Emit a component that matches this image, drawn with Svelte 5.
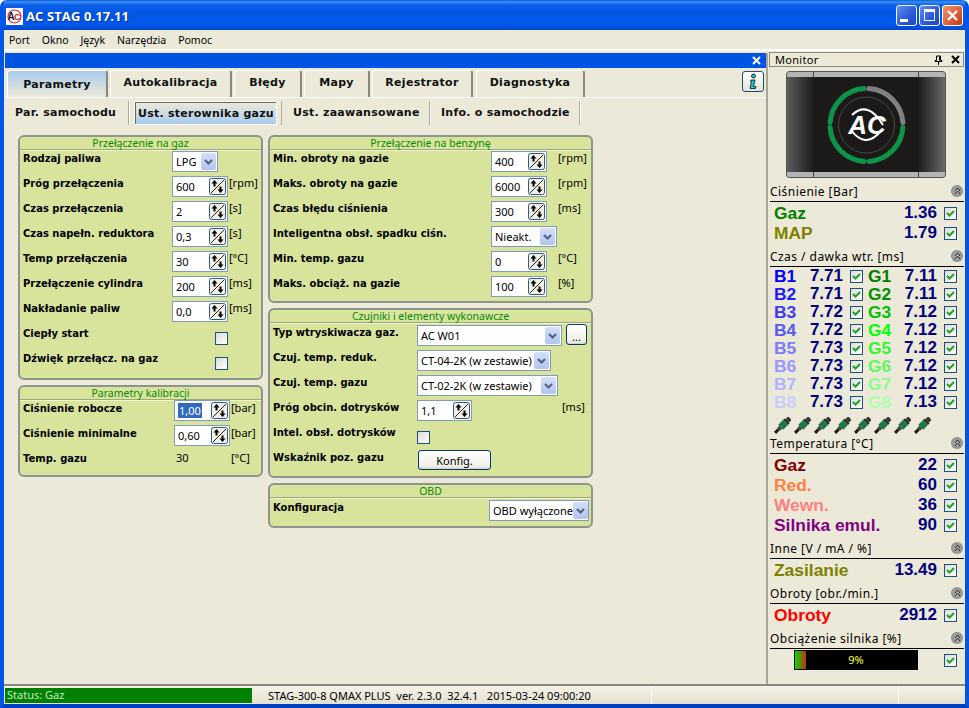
<script>
  const tabs = ['Parametry', 'Autokalibracja', 'Błędy', 'Mapy', 'Rejestrator', 'Diagnostyka'];
  const subtabs = ['Par. samochodu', 'Ust. sterownika gazu', 'Ust. zaawansowane', 'Info. o samochodzie'];

  const gasRows = [
    { label: 'Próg przełączenia', value: '600', unit: '[rpm]' },
    { label: 'Czas przełączenia', value: '2', unit: '[s]' },
    { label: 'Czas napełn. reduktora', value: '0,3', unit: '[s]' },
    { label: 'Temp przełączenia', value: '30', unit: '[°C]' },
    { label: 'Przełączenie cylindra', value: '200', unit: '[ms]' },
    { label: 'Nakładanie paliw', value: '0,0', unit: '[ms]' }
  ];
  const petrolTop = [
    { label: 'Min. obroty na gazie', value: '400', unit: '[rpm]' },
    { label: 'Maks. obroty na gazie', value: '6000', unit: '[rpm]' },
    { label: 'Czas błędu ciśnienia', value: '300', unit: '[ms]' }
  ];
  const pressure = [
    { label: 'Gaz', value: '1.36', color: '#008000' },
    { label: 'MAP', value: '1.79', color: '#808000' }
  ];
  const injectors = [
    ['B1', '7.71', '#0000ff', 'G1', '7.11', '#008000'],
    ['B2', '7.71', '#1c1cff', 'G2', '7.11', '#009000'],
    ['B3', '7.72', '#3c3cf8', 'G3', '7.12', '#00c000'],
    ['B4', '7.72', '#5a5af8', 'G4', '7.12', '#00ff00'],
    ['B5', '7.73', '#7c7cfc', 'G5', '7.12', '#30f830'],
    ['B6', '7.73', '#9898ff', 'G6', '7.12', '#60f860'],
    ['B7', '7.73', '#b4b4ff', 'G7', '7.12', '#88fc88'],
    ['B8', '7.73', '#ccccff', 'G8', '7.13', '#acffac']
  ];
  const temps = [
    { label: 'Gaz', value: '22', color: '#800000' },
    { label: 'Red.', value: '60', color: '#ff8040' },
    { label: 'Wewn.', value: '36', color: '#ff8080' },
    { label: 'Silnika emul.', value: '90', color: '#800080' }
  ];
</script>

{#snippet spin(value, selected = false)}
  <div class="field spin">
    <span class="val" class:sel={selected}>{value}</span>
    <svg class="spinbtn" width="17" height="17" viewBox="0 0 17 17">
      <rect x=".5" y=".5" width="16" height="16" rx="2" fill="#f1efe6" stroke="#2c5a84" />
      <path d="M2 15 15 2" stroke="#222" fill="none" />
      <path d="M5.500 2 2.500 5.500h2v3h2v-3h2z" fill="#000" />
      <path d="M11.500 15l3-3.500h-2v-3h-2v3h-2z" fill="#000" />
    </svg>
  </div>
{/snippet}

{#snippet select(value, cls)}
  <div class="field combo {cls}">
    <span class="val">{value}</span>
    <span class="arrow">
      <svg width="9" height="6" viewBox="0 0 9 6"><path d="M1 1l3.500 3.500L8 1" fill="none" stroke="#4d6185" stroke-width="2" /></svg>
    </span>
  </div>
{/snippet}

{#snippet check(on = true)}
  <span class="check">
    {#if on}
      <svg width="11" height="11" viewBox="0 0 11 11"><path d="M2 5l2.500 2.500L9 3" fill="none" stroke="#21a121" stroke-width="2" /></svg>
    {/if}
  </span>
{/snippet}

{#snippet monHead(title)}
  <div class="mon-head">
    <span>{title}</span>
    <span class="collapse">
      <svg width="7" height="8" viewBox="0 0 7 8"><path d="M1 4l2.500-3L6 4M1 7l2.500-3L6 7" fill="none" stroke="#222" /></svg>
    </span>
  </div>
{/snippet}

{#snippet monRow(row)}
  <div class="mon-row">
    <span class="big" style:color={row.color}>{row.label}</span>
    <span class="big num">{row.value}</span>
    {@render check()}
  </div>
{/snippet}

<div class="window">
  <header class="titlebar">
    <svg class="appicon" width="17" height="17" viewBox="0 0 17 17">
      <rect width="17" height="17" fill="#fff" />
      <circle cx="8.500" cy="8.500" r="6.500" fill="none" stroke="#d22" stroke-width="1.200" />
      <text x="1.500" y="12" font-size="10" font-weight="700" font-family="Liberation Sans" fill="#123">A</text>
      <text x="8" y="12" font-size="9" font-weight="700" font-family="Liberation Sans" fill="#d22">C</text>
    </svg>
    <span class="apptitle">AC STAG 0.17.11</span>
    <div class="winbtns">
      <span class="winbtn"><i class="min"></i></span>
      <span class="winbtn"><i class="max"></i></span>
      <span class="winbtn close">
        <svg width="13" height="13" viewBox="0 0 13 13"><path d="M2 2l9 9M11 2l-9 9" stroke="#fff" stroke-width="2.400" /></svg>
      </span>
    </div>
  </header>

  <nav class="menubar">
    <span>Port</span><span>Okno</span><span>Język</span><span>Narzędzia</span><span>Pomoc</span>
  </nav>

  <div class="workspace">
    <main class="doc">
      <div class="doc-bar">
        <svg width="9" height="9" viewBox="0 0 9 9"><path d="M1 1l7 7M8 1l-7 7" stroke="#fff" stroke-width="2" /></svg>
      </div>

      <div class="tabs">
        {#each tabs as tab, i}
          <div class="tab" class:active={i === 0}>{tab}</div>
        {/each}
        <button class="info" aria-label="Info">
          <svg width="10" height="17" viewBox="0 0 10 17">
            <circle cx="5.500" cy="3" r="2" fill="#16c8d8" stroke="#111" stroke-width=".8" />
            <path d="M3 7h4l-1.500 6.500H8L7.500 15.500H2l1.500-7H2.500z" fill="#16c8d8" stroke="#111" stroke-width=".8" />
          </svg>
        </button>
      </div>

      <div class="subtabs">
        {#each subtabs as tab, i}
          <div class="subtab" class:active={i === 1}><span>{tab}</span></div>
        {/each}
      </div>

      <div class="columns">
        <div class="col left">
          <section class="group g-gas">
            <h3>Przełączenie na gaz</h3>
            <div class="row">
              <label>Rodzaj paliwa</label>
              {@render select('LPG', 'w-lpg')}
            </div>
            {#each gasRows as row}
              <div class="row">
                <label>{row.label}</label>
                {@render spin(row.value)}
                <span class="unit">{row.unit}</span>
              </div>
            {/each}
            <div class="row">
              <label>Ciepły start</label>
              <span class="chk-cell">{@render check(false)}</span>
            </div>
            <div class="row">
              <label>Dźwięk przełącz. na gaz</label>
              <span class="chk-cell">{@render check(false)}</span>
            </div>
          </section>

          <section class="group g-cal">
            <h3>Parametry kalibracji</h3>
            <div class="row">
              <label>Ciśnienie robocze</label>
              {@render spin('1,00', true)}
              <span class="unit">[bar]</span>
            </div>
            <div class="row">
              <label>Ciśnienie minimalne</label>
              {@render spin('0,60')}
              <span class="unit">[bar]</span>
            </div>
            <div class="row">
              <label>Temp. gazu</label>
              <span class="plain">30</span>
              <span class="unit">[°C]</span>
            </div>
          </section>
        </div>

        <div class="col right">
          <section class="group g-pet">
            <h3>Przełączenie na benzynę</h3>
            {#each petrolTop as row}
              <div class="row">
                <label>{row.label}</label>
                {@render spin(row.value)}
                <span class="unit">{row.unit}</span>
              </div>
            {/each}
            <div class="row">
              <label>Inteligentna obsł. spadku ciśn.</label>
              {@render select('Nieakt.', 'w-nie')}
            </div>
            <div class="row">
              <label>Min. temp. gazu</label>
              {@render spin('0')}
              <span class="unit">[°C]</span>
            </div>
            <div class="row">
              <label>Maks. obciąż. na gazie</label>
              {@render spin('100')}
              <span class="unit">[%]</span>
            </div>
          </section>

          <section class="group g-act">
            <h3>Czujniki i elementy wykonawcze</h3>
            <div class="row">
              <label>Typ wtryskiwacza gaz.</label>
              {@render select('AC W01', 'w-ac')}
              <button class="btn dots">...</button>
            </div>
            <div class="row">
              <label>Czuj. temp. reduk.</label>
              {@render select('CT-04-2K (w zestawie)', 'w-ct4')}
            </div>
            <div class="row">
              <label>Czuj. temp. gazu</label>
              {@render select('CT-02-2K (w zestawie)', 'w-ct2')}
            </div>
            <div class="row">
              <label>Próg obcin. dotrysków</label>
              {@render spin('1,1')}
              <span class="unit">[ms]</span>
            </div>
            <div class="row">
              <label>Intel. obsł. dotrysków</label>
              <span class="chk-cell">{@render check(false)}</span>
            </div>
            <div class="row">
              <label>Wskaźnik poz. gazu</label>
              <button class="btn konfig">Konfig.</button>
            </div>
          </section>

          <section class="group g-obd">
            <h3>OBD</h3>
            <div class="row">
              <label>Konfiguracja</label>
              {@render select('OBD wyłączone', 'w-obd')}
            </div>
          </section>
        </div>
      </div>
    </main>

    <aside class="monitor">
      <div class="mon-title">
        <span>Monitor</span>
        <svg width="9" height="10" viewBox="0 0 9 10"><path d="M2.500 1h4v4.500h1.500v1H1v-1h1.500zM4.500 6.500V10M5.500 1.500v4" fill="none" stroke="#000" /></svg>
        <svg width="9" height="9" viewBox="0 0 9 9"><path d="M1 1l7 7M8 1l-7 7" stroke="#000" stroke-width="2" /></svg>
      </div>

      <div class="logo">
        <svg width="160" height="107" viewBox="0 0 160 107">
          <defs>
            <linearGradient id="sideL" x1="0" x2="1"><stop offset="0" stop-color="#5c5c5c" /><stop offset="1" stop-color="#1c1a18" /></linearGradient>
            <linearGradient id="sideR" x1="0" x2="1"><stop offset="0" stop-color="#1c1a18" /><stop offset="1" stop-color="#6a6a6a" /></linearGradient>
          </defs>
          <rect x=".5" y=".5" width="159" height="106" rx="3" fill="#1c1a18" stroke="#555" />
          <rect x="1" y="6" width="27" height="95" fill="url(#sideL)" />
          <rect x="132" y="6" width="27" height="95" fill="url(#sideR)" />
          <path d="M1 6V3q0-2 2-2h154q2 0 2 2v3zM1 101h158v3q0 2-2 2H3q-2 0-2-2z" fill="#b4b4b4" />
          <path d="M27.500 1v5M132.500 1v5M27.500 101v5M132.500 101v5" stroke="#444" />
          <g fill="none" stroke-width="5" stroke-linecap="round">
            <path d="M78 17.600A36.500 36.500 0 0 0 44.100 51.500" stroke="#0d9448" />
            <path d="M44.100 56.500A36.500 36.500 0 0 0 78 90.400" stroke="#0d9448" />
            <path d="M83 90.400A36.500 36.500 0 0 0 116.900 56.500" stroke="#0d9448" />
            <path d="M83 17.600A36.500 36.500 0 0 1 116.900 51.500" stroke="#808080" />
          </g>
          <circle cx="80.500" cy="54" r="28" fill="none" stroke="#4a4844" />
          <path d="M65 59Q79 78 94 61M66 44Q82 29 97 54" fill="none" stroke="#fff" stroke-width="2" />
          <text x="81" y="63" text-anchor="middle" font-family="Liberation Sans" font-style="italic" font-weight="700" font-size="26" fill="#fff">AC</text>
        </svg>
      </div>

      {@render monHead('Ciśnienie [Bar]')}
      {#each pressure as row}
        {@render monRow(row)}
      {/each}

      <div class="gap"></div>
      {@render monHead('Czas / dawka wtr. [ms]')}
      {#each injectors as r}
        <div class="inj-row">
          <span class="big" style:color={r[2]}>{r[0]}</span>
          <span class="big num">{r[1]}</span>
          {@render check()}
          <span class="big" style:color={r[5]}>{r[3]}</span>
          <span class="big num">{r[4]}</span>
          {@render check()}
        </div>
      {/each}
      <div class="nozzles">
        {#each Array(8) as _}
          <svg width="17" height="17" viewBox="0 0 17 17">
            <g transform="rotate(45 8.500 8.500)">
              <rect x="6" y="-2" width="5" height="4" fill="#3a3a3a" />
              <rect x="5" y="2" width="7" height="2" fill="#1e1e1e" />
              <rect x="5" y="4" width="7" height="7" fill="#1a7a46" />
              <rect x="6.500" y="11" width="4" height="3" fill="#444" />
              <rect x="7" y="14" width="3" height="5" fill="#1e1e1e" />
            </g>
          </svg>
        {/each}
      </div>

      <div class="gap small"></div>
      {@render monHead('Temperatura [°C]')}
      {#each temps as row}
        {@render monRow(row)}
      {/each}

      <div class="gap"></div>
      {@render monHead('Inne [V / mA / %]')}
      {@render monRow({ label: 'Zasilanie', value: '13.49', color: '#808000' })}

      <div class="gap"></div>
      {@render monHead('Obroty [obr./min.]')}
      {@render monRow({ label: 'Obroty', value: '2912', color: '#ff0000' })}

      <div class="gap"></div>
      {@render monHead('Obciążenie silnika [%]')}
      <div class="load">
        <div class="loadbar"><i></i><span>9%</span></div>
        {@render check()}
      </div>
    </aside>
  </div>

  <footer class="statusbar">
    <div class="st-green">Status: Gaz</div>
    <div class="st-text">STAG-300-8 QMAX PLUS&nbsp; ver. 2.3.0&nbsp; 32.4.1&nbsp;&nbsp; 2015-03-24 09:00:20</div>
    <div class="st-cell"></div>
    <div class="st-cell last"></div>
  </footer>
</div>

<style>
  :global(body) {
    margin: 0;
    background: #fff;
    overflow: hidden;
  }

  .window {
    width: 969px;
    height: 708px;
    box-sizing: border-box;
    display: flex;
    flex-direction: column;
    background: #ece9d8;
    border-left: 4px solid #0055e5;
    border-right: 4px solid #0055e5;
    border-bottom: 4px solid #0041c4;
    border-radius: 7px 7px 0 0;
    font-family: "Noto Sans", Tahoma, sans-serif;
    font-size: 11px;
    color: #000;
    overflow: hidden;
  }

  .titlebar {
    height: 30px;
    flex: none;
    margin: 0 -4px;
    padding: 0 6px;
    display: flex;
    align-items: center;
    background: linear-gradient(#0a5fe0 0, #3b8ff5 2px, #0a60ea 5px, #0055e5 14px, #0058ee 24px, #0048c8 30px);
  }

  .appicon {
    margin-top: 2px;
  }

  .apptitle {
    margin: 2px 0 0 3px;
    color: #fff;
    font-family: "Open Sans", sans-serif;
    font-weight: 700;
    font-size: 13px;
    letter-spacing: .1px;
    text-shadow: 1px 1px 0 #0a2f90;
  }

  .winbtns {
    margin-left: auto;
    display: flex;
    gap: 2px;
  }

  .winbtn {
    width: 21px;
    height: 21px;
    box-sizing: border-box;
    border: 1px solid #fff;
    border-radius: 3px;
    display: flex;
    align-items: center;
    justify-content: center;
    background: linear-gradient(135deg, #5f8ff0, #2a58d8 60%, #2048c0);
  }

  .winbtn.close {
    background: linear-gradient(135deg, #ee9a78, #dc5a30 60%, #c03a18);
  }

  .min {
    width: 8px;
    height: 3px;
    background: #fff;
    margin: 10px 6px 0 0;
  }

  .max {
    width: 9px;
    height: 8px;
    border: 1px solid #fff;
    border-top-width: 3px;
  }

  .menubar {
    height: 19px;
    flex: none;
    display: flex;
    align-items: center;
    gap: 12px;
    padding: 0 0 0 5px;
    box-sizing: border-box;
    font-size: 10.5px;
  }

  .workspace {
    flex: 1;
    min-height: 0;
    display: flex;
    border-top: 2px solid #fff;
    padding-top: 2px;
  }

  .doc {
    width: 763px;
    box-sizing: border-box;
    margin-left: 1px;
    flex: none;
    border-right: 2px solid #a8a598;
  }

  .doc-bar {
    height: 15px;
    background: #0054e3;
    display: flex;
    align-items: center;
    justify-content: flex-end;
    padding-right: 5px;
  }

  .tabs {
    height: 27px;
    margin-top: 2px;
    padding-left: 2px;
    display: flex;
    gap: 2px;
    position: relative;
    border-bottom: 1px solid #fff;
  }

  .tab {
    box-sizing: border-box;
    border-top: 1px solid #fff;
    border-left: 1px solid #fff;
    border-right: 2px solid #8a8878;
    border-radius: 3px 3px 0 0;
    text-align: center;
    font-family: "DejaVu Sans", sans-serif;
    font-weight: 700;
    font-size: 11px;
    letter-spacing: .3px;
    line-height: 24px;
    color: #111;
    white-space: nowrap;
  }

  .tab:nth-child(1) { width: 101px; }
  .tab:nth-child(2) { width: 122px; }
  .tab:nth-child(3) { width: 68px; }
  .tab:nth-child(4) { width: 66px; }
  .tab:nth-child(5) { width: 101px; }
  .tab:nth-child(6) { width: 109px; margin-left: 1px; }

  .tab.active {
    background: linear-gradient(#a8cbec, #ece9d8);
    line-height: 27px;
  }

  .info {
    position: absolute;
    right: 2px;
    top: 1px;
    width: 22px;
    height: 21px;
    padding: 0;
    border: 1px solid #1f4f80;
    border-radius: 3px;
    background: linear-gradient(#fff, #e6e3d6);
    display: flex;
    align-items: center;
    justify-content: center;
  }

  .subtabs {
    height: 24px;
    margin-top: 3px;
    display: flex;
    font-family: "DejaVu Sans", sans-serif;
    font-weight: 700;
    font-size: 11px;
    letter-spacing: .25px;
    color: #111;
  }

  .subtab {
    box-sizing: border-box;
    border-right: 1px solid #b0ad9e;
    box-shadow: 1px 0 0 #fff;
    line-height: 23px;
    white-space: nowrap;
    padding-left: 10px;
  }

  .subtab:nth-child(1) { width: 124px; }
  .subtab:nth-child(2) {
    width: 143px;
    margin-left: 5px;
    padding: 0;
    border: 1px solid #fff;
    box-shadow: none;
    text-align: center;
  }
  .subtab:nth-child(3) { width: 149px; margin-left: 4px; padding-left: 11px; border-left: 1px solid #b0ad9e; }
  .subtab:nth-child(4) { width: 150px; padding-left: 11px; }

  .subtab.active span {
    display: block;
    height: 100%;
    border-left: 1px solid #66665c;
    border-top: 1px solid #66665c;
    background: linear-gradient(#ece9d8, #a8cbec);
    line-height: 21px;
    box-sizing: border-box;
  }

  .columns {
    margin-top: 10px;
    padding-left: 13px;
    display: flex;
    gap: 5px;
    align-items: flex-start;
  }

  .col {
    display: flex;
    flex-direction: column;
    gap: 5px;
  }

  .col.left { width: 245px; }
  .col.right { width: 325px; }

  .group {
    box-sizing: border-box;
    background: #d8e49c;
    border: 2px solid #8e9590;
    border-radius: 6px;
    padding-left: 3px;
  }

  .g-gas { height: 245px; }
  .g-cal { height: 92px; }
  .g-pet { height: 168px; }
  .g-act { height: 170px; }
  .g-obd { height: 45px; }

  h3 {
    margin: 0 0 0 -3px;
    height: 13px;
    line-height: 12px;
    box-sizing: border-box;
    border-bottom: 1px solid #a0a880;
    box-shadow: 0 1px 0 #f0f4d0;
    font-weight: 400;
    font-size: 10.5px;
    text-align: center;
    color: #0a8a0a;
  }

  .g-act h3, .g-obd h3 {
    margin-bottom: 1px;
  }

  .row {
    height: 25px;
    display: grid;
    align-items: start;
  }

  .row label {
    font-family: "DejaVu Sans", sans-serif;
    font-weight: 700;
    font-size: 10px;
    line-height: 14px;
    padding-top: 2px;
    white-space: nowrap;
  }

  .g-gas .row { grid-template-columns: 149px 56px auto; }
  .g-cal .row { grid-template-columns: 151px 56px auto; }
  .g-pet .row { grid-template-columns: 218px 56px auto; }
  .g-act .row { grid-template-columns: 144px auto auto 1fr; }
  .g-obd .row { grid-template-columns: 216px auto; }

  .g-pet .unit { padding-left: 11px; }
  .g-act .unit { grid-column: 4; padding-left: 90px; }

  .field {
    box-sizing: border-box;
    height: 21px;
    margin-top: 1px;
    background: #fff;
    border: 1px solid #7f9db9;
    box-shadow: inset 0 0 0 1px #fff;
    display: flex;
    align-items: center;
    font-size: 11px;
  }

  .val {
    padding: 0 0 0 2px;
    white-space: nowrap;
    line-height: 15px;
  }

  .val.sel {
    background: #316ac5;
    color: #fff;
    padding: 0 1px;
    margin-left: 2px;
  }

  .spin {
    width: 56px;
    position: relative;
    padding-left: 1px;
  }

  .g-act .spin { width: 55px; }
  .g-cal .field { margin-top: 0; }

  .spinbtn {
    position: absolute;
    right: 1px;
    top: 1px;
  }

  .combo {
    justify-content: space-between;
    padding: 0 1px 0 2px;
  }

  .combo .val { padding-left: 1px; }

  .arrow {
    width: 15px;
    height: 17px;
    flex: none;
    border-radius: 2px;
    background: linear-gradient(#d5dff8, #b2c3ee);
    display: flex;
    align-items: center;
    justify-content: center;
  }

  .w-lpg { width: 46px; }
  .w-nie { width: 66px; }
  .w-ac { width: 145px; }
  .w-ct4 { width: 134px; }
  .w-ct2 { width: 141px; }
  .w-obd { width: 100px; }

  .unit, .plain {
    white-space: nowrap;
    font-size: 11px;
    line-height: 14px;
    padding-left: 1px;
    padding-top: 1px;
  }

  .plain {
    padding-left: 2px;
  }

  .chk-cell {
    padding-top: 7px;
    padding-left: 43px;
    line-height: 0;
  }

  .g-act .chk-cell {
    padding-left: 0;
  }

  .check {
    display: inline-flex;
    align-items: center;
    justify-content: center;
    box-sizing: border-box;
    width: 13px;
    height: 13px;
    flex: none;
    border: 1px solid #1c5180;
    background: linear-gradient(135deg, #dcdcd7, #fff);
  }

  .btn {
    box-sizing: border-box;
    padding: 0;
    border: 1px solid #003c74;
    border-radius: 3px;
    background: linear-gradient(#fff, #f0efe6 85%, #d6d0c5);
    font-family: inherit;
    font-size: 11px;
    color: #000;
  }

  .dots {
    width: 21px;
    height: 21px;
    margin-left: 4px;
    padding-top: 3px;
  }

  .konfig {
    width: 73px;
    height: 20px;
    margin: 1px 0 0 1px;
  }

  .monitor {
    flex: 1;
    min-width: 0;
    padding: 0 1px 0 2px;
    box-sizing: border-box;
  }

  .mon-title {
    height: 15px;
    margin: -1px 0 0 -1px;
    box-sizing: border-box;
    border: 1px solid #8e8c80;
    display: flex;
    align-items: center;
    gap: 8px;
    padding: 0 3px 0 5px;
    font-size: 11px;
    letter-spacing: .3px;
  }

  .mon-title span {
    margin-right: auto;
  }

  .logo {
    height: 107px;
    margin: 4px 0 6px 16px;
    line-height: 0;
  }

  .mon-head {
    height: 18px;
    box-sizing: border-box;
    border-bottom: 1px solid #000;
    display: flex;
    justify-content: space-between;
    align-items: flex-start;
    font-size: 12px;
    letter-spacing: .45px;
    line-height: 15px;
  }

  .collapse {
    width: 12px;
    height: 12px;
    margin: 1px 1px 0 0;
    border-radius: 50%;
    background: radial-gradient(#bbb, #777);
    display: flex;
    align-items: center;
    justify-content: center;
  }

  .mon-row {
    height: 20px;
    margin-top: 1px;
    margin-bottom: -1px;
    padding: 0 7px 0 4px;
    display: grid;
    grid-template-columns: 1fr auto 13px;
    column-gap: 7px;
    align-items: center;
  }

  .big {
    font-family: "Liberation Sans", Arial, sans-serif;
    font-weight: 700;
    font-size: 17.4px;
    line-height: 18px;
    white-space: nowrap;
  }

  .big.num {
    color: #000080;
    font-size: 17px;
    text-align: right;
  }

  .inj-row {
    height: 18px;
    padding-left: 4px;
    display: grid;
    grid-template-columns: 35px 34px 20px 40px 34px 20px;
    align-items: center;
    justify-content: start;
  }

  .inj-row .check { margin-left: 7px; }
  .inj-row .big:nth-child(4) { margin-left: 5px; }

  .nozzles {
    height: 17px;
    padding: 6px 0 0 4px;
    display: flex;
    gap: 3px;
  }

  .gap { height: 7px; }
  .gap.small { height: 2px; }

  .load {
    height: 20px;
    margin-top: 1px;
    padding: 0 7px 0 24px;
    display: flex;
    align-items: center;
    justify-content: space-between;
  }

  .loadbar {
    width: 124px;
    height: 20px;
    background: #000;
    position: relative;
    text-align: center;
    color: #ffff40;
    font-size: 11px;
    line-height: 20px;
  }

  .loadbar i {
    position: absolute;
    left: 1px;
    top: 1px;
    bottom: 1px;
    width: 11px;
    background: linear-gradient(90deg, #00e000, #c03010);
  }

  .loadbar span {
    position: relative;
  }

  .statusbar {
    height: 18px;
    flex: none;
    margin-top: auto;
    display: flex;
    align-items: center;
    border-top: 2px solid #8a8878;
    background: linear-gradient(#f4f2e8, #e4e1d0);
    font-size: 11px;
  }

  .st-green {
    width: 247px;
    height: 15px;
    margin-left: 1px;
    padding-left: 2px;
    box-sizing: border-box;
    background: #008000;
    color: #c8e8c8;
    line-height: 14px;
  }

  .st-text {
    width: 399px;
    box-sizing: border-box;
    padding-left: 16px;
    white-space: nowrap;
  }

  .st-cell {
    width: 246px;
    height: 18px;
    border-left: 1px solid #fff;
  }

  .st-cell.last {
    width: 66px;
  }
</style>
